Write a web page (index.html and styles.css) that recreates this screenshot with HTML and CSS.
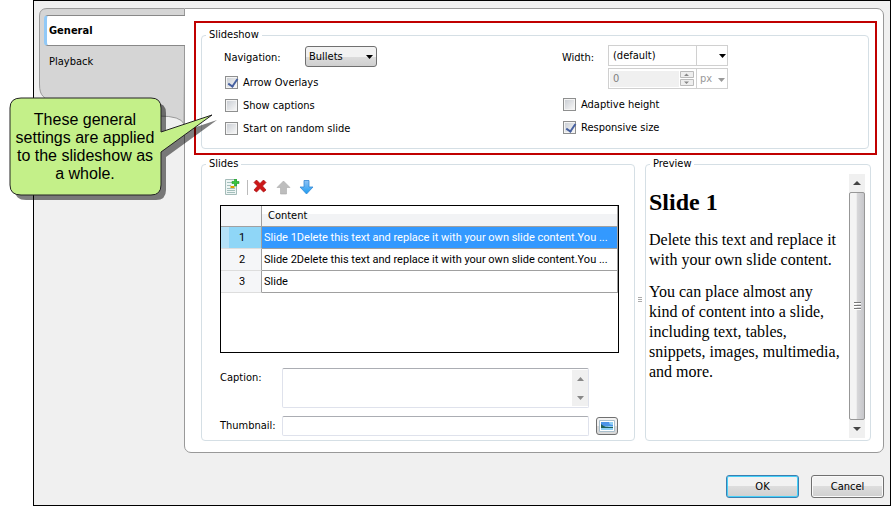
FILE: index.html
```
<!DOCTYPE html>
<html lang="en">
<head>
<meta charset="utf-8">
<title>Slideshow Properties</title>
<link rel="stylesheet" href="styles.css">
</head>
<body>
<div class="dialog">
  <div class="workspace">
    <nav class="tabs">
      <svg class="tabs-shape" viewBox="0 0 145 116"><path d="M146 .5H8Q.5 .5 .5 8V76C.5 90 6 88 12 96C20 110 50 108 120 108Q142 108 145 116Z" fill="#d5d5d5" stroke="#999"/></svg>
      <a class="tab active" href="#general">General</a>
      <a class="tab" href="#playback">Playback</a>
    </nav>
    <main class="page" id="general">
      <div class="highlight">
        <fieldset class="group slideshow">
          <legend>Slideshow</legend>
          <div class="column">
            <div class="field">
              <label class="nav-label" for="navigation">Navigation:</label>
              <span class="dropdown">
                <select id="navigation"><option>Bullets</option></select>
                <svg class="arrow" viewBox="0 0 7 4"><path d="M0 0h7L3.500 4z"/></svg>
              </span>
            </div>
            <label class="check"><input type="checkbox" checked>Arrow Overlays</label>
            <label class="check"><input type="checkbox">Show captions</label>
            <label class="check"><input type="checkbox">Start on random slide</label>
          </div>
          <div class="column">
            <div class="field size-field">
              <label class="width-label" for="width-mode">Width:</label>
              <div class="size-controls">
                <span class="flat-select">
                  <select id="width-mode"><option>(default)</option></select>
                  <svg class="arrow" viewBox="0 0 7 4"><path d="M0 0h7L3.500 4z"/></svg>
                </span>
                <div class="size-row">
                  <span class="spinner">
                    <input type="text" value="0" aria-label="Width value" disabled>
                    <svg viewBox="0 0 14 15"><path d="M.5.500h13v6H.5zM.5 8.500h13v6H.5z" fill="#eee" stroke="#bbb"/><path d="M4 5h5L6.500 2.500zM4 10.500h5L6.500 13z" fill="#888"/></svg>
                  </span>
                  <span class="unit">
                    <select aria-label="Unit" disabled><option>px</option></select>
                    <svg class="arrow" viewBox="0 0 7 4"><path d="M0 0h7L3.500 4z"/></svg>
                  </span>
                </div>
              </div>
            </div>
            <label class="check"><input type="checkbox">Adaptive height</label>
            <label class="check"><input type="checkbox" checked>Responsive size</label>
          </div>
        </fieldset>
      </div>
      <div class="lower">
        <fieldset class="group">
          <legend>Slides</legend>
          <div class="slides">
            <div class="toolbar">
              <button type="button" aria-label="Add slide"><svg viewBox="0 0 16 16"><path d="M1.500.500h11v15h-11z" fill="#eef5f4" stroke="#a5bcb9"/><path d="M3 3.500h5M3 6.500h4M3 9.500h8M3 11.500h8M3 13.500h8" stroke="#a3bfbc"/><path d="M6.500 7h4v2h-4z" fill="#dba000"/><path d="M10.500 0h2v2.500H15v2h-2.500V7h-2V4.500H8v-2h2.500z" fill="#39c83c" stroke="#189525" stroke-width=".6"/></svg></button>
              <span class="separator"></span>
              <button type="button" aria-label="Delete slide"><svg viewBox="0 0 16 16"><path d="M1 3.500 3.500 1 7 4.500 10.500 1 13 3.500 9.500 7 13 11 10.500 13 7 9.500 3.500 13 1 11 4.500 7z" fill="#cc1718" stroke="#a80c0c" stroke-width=".7"/></svg></button>
              <button type="button" aria-label="Move up"><svg viewBox="0 0 16 16"><path d="M7.500 2 14 8.500H10.500V15h-6V8.500H1z" fill="#bdbdbd" stroke="#aaa" stroke-width=".6"/></svg></button>
              <button type="button" aria-label="Move down"><svg viewBox="0 0 16 16"><defs><linearGradient id="down" x1="0" x2="0" y1="0" y2="1"><stop stop-color="#8fc2f5"/><stop offset="1" stop-color="#1b9cf2"/></linearGradient></defs><path d="M5 1.500h5V8H14L7.500 15 1 8h4z" fill="url(#down)" stroke="#3488d4" stroke-width=".8"/></svg></button>
            </div>
            <div class="list">
              <table>
                <thead><tr><th class="number"></th><th>Content</th></tr></thead>
                <tbody>
                  <tr class="selected"><td class="number">1</td><td>Slide 1Delete this text and replace it with your own slide content.You ...</td></tr>
                  <tr><td class="number">2</td><td>Slide 2Delete this text and replace it with your own slide content.You ...</td></tr>
                  <tr><td class="number">3</td><td>Slide</td></tr>
                </tbody>
              </table>
            </div>
            <div class="details">
              <label for="caption">Caption:</label>
              <div class="caption-box">
                <textarea id="caption"></textarea>
                <svg viewBox="0 0 16 36"><path d="M0 0h16v36H0z" fill="#f0f0f0"/><path d="M5 11h7L8.500 7zM5 26h7l-3.500 4z" fill="#888"/></svg>
              </div>
              <label for="thumbnail">Thumbnail:</label>
              <input id="thumbnail" type="text">
              <button class="picture" type="button" aria-label="Choose thumbnail"><svg viewBox="0 0 16 12"><path d="M.5.500h15v11H.5z" fill="#fff" stroke="#a9bfcc"/><path d="M2 2h12v8H2z" fill="#8fd0f5"/><path d="M2 2h8c0 2 1 3 4 3v1H2z" fill="#4b93e8"/><path d="M2 4c3 3 6 3 12 3v1H2z" fill="#1f5f58"/></svg></button>
            </div>
          </div>
        </fieldset>
        <div class="splitter"><i></i><i></i><i></i></div>
        <fieldset class="group preview">
          <legend>Preview</legend>
          <article>
            <h1>Slide 1</h1>
            <p>Delete this text and replace it with your own slide content.</p>
            <p>You can place almost any kind of content into a slide, including text, tables, snippets, images, multimedia, and more.</p>
          </article>
          <div class="scrollbar">
            <svg viewBox="0 0 16 18"><path d="M4 11h8L8 7z"/></svg>
            <div class="thumb"><i></i><i></i><i></i></div>
            <svg viewBox="0 0 16 18"><path d="M4 7h8L8 11z"/></svg>
          </div>
        </fieldset>
      </div>
    </main>
  </div>
  <footer>
    <button class="command default" type="button">OK</button>
    <button class="command" type="button">Cancel</button>
  </footer>
</div>
<aside class="callout">
  <svg viewBox="0 0 222 116">
    <path transform="translate(5 5)" d="M12 4H142Q152 4 152 14V38L203 21 152 58V91Q152 101 142 101H12Q1 101 1 91V14Q1 4 12 4Z" fill="#000" fill-opacity=".5"/>
    <path d="M12 4H142Q152 4 152 14V38L203 21 152 58V91Q152 101 142 101H12Q1 101 1 91V14Q1 4 12 4Z" fill="#c4f089" stroke="#222"/>
  </svg>
  <p>These general settings are applied to the slideshow as a whole.</p>
</aside>
</body>
</html>
```
FILE: styles.css
```
* { box-sizing: border-box; }
body {
  margin: 0;
  background: #fff;
  color: #000;
  font: 11px/14px "DejaVu Sans Condensed", "Noto Sans", sans-serif;
}
button, input, select, textarea { font: inherit; color: inherit; margin: 0; }
.dialog {
  display: flex;
  flex-direction: column;
  min-height: 100vh;
  margin-left: 33px;
  padding: 7px 6px 7px 5px;
  border: 1px solid #000;
  background: #f0f0f0;
}
.workspace { display: flex; flex: 1; }
.tabs { position: relative; width: 145px; flex: none; padding: 7px 0 0 5px; }
.tabs-shape { position: absolute; left: 0; top: 0; width: 145px; height: 116px; }
.tab {
  position: relative;
  display: flex;
  align-items: center;
  height: 31px;
  padding-left: 5px;
  color: #000;
  text-decoration: none;
}
.tab.active {
  z-index: 1;
  margin-right: -1px;
  font-weight: bold;
  background: #fff;
  border: 1px solid #888;
  border-left: 3px solid #91c9f7;
  border-right: 0;
  border-radius: 4px 0 0 4px;
  padding-left: 2px;
}
.page {
  flex: 1;
  min-width: 0;
  display: flex;
  flex-direction: column;
  padding: 12px 6px 11px 9px;
  background: #fff;
  border: 1px solid #999;
  border-radius: 0 7px 7px 7px;
}
.highlight { border: 2px solid #c00000; padding: 5px 6px 4px 5px; }
.group { margin: 0; padding: 0; border: 1px solid #d5dfe5; border-radius: 4px; min-width: 0; }
.group > legend { margin-left: 4px; padding: 0 3px; }
.slideshow { display: grid; grid-template-columns: 338px 1fr; height: 121px; }
.column { padding: 4px 0 0 22px; }
.field { display: flex; }
.nav-label { width: 81px; padding-top: 5px; }
.dropdown { position: relative; }
select { appearance: none; }
.dropdown select {
  width: 72px;
  height: 21px;
  padding: 0 3px;
  border: 1px solid #707070;
  border-radius: 3px;
  background: linear-gradient(#f2f2f2 50%, #ddd 50%, #cfcfcf);
}
.arrow { position: absolute; right: 4px; top: 9px; width: 7px; height: 4px; }
.check { display: flex; align-items: center; height: 23px; gap: 5px; padding-left: 1px; }
.field + .check { margin-top: 4px; }
.check input {
  appearance: none;
  width: 13px;
  height: 13px;
  border: 1px solid #8e8f8f;
  background: linear-gradient(135deg, #cbcfd5, #f6f6f6) center / 9px 9px no-repeat #f4f4f4;
}
.check input:checked::before {
  content: "";
  display: block;
  width: 4px;
  height: 8px;
  margin: 0 0 0 4px;
  border: solid #4660a0;
  border-width: 0 2px 2px 0;
  transform: rotate(35deg);
}
.width-label { width: 46px; padding-top: 5px; }
.size-controls { width: 120px; display: grid; gap: 2px; margin-top: -1px; }
.flat-select { position: relative; height: 21px; }
.flat-select select {
  width: 100%;
  height: 21px;
  padding: 0 4px;
  border: 1px solid #d0d0d0;
  background: linear-gradient(#d0d0d0, #d0d0d0) 87px 0 / 1px 100% no-repeat #fff;
}
.flat-select .arrow, .unit .arrow { right: 2px; }
.size-row { display: flex; height: 21px; border: 1px solid #d0d0d0; color: #808080; }
.spinner { display: flex; align-items: center; width: 88px; padding: 1px 2px 1px 1px; border-right: 1px solid #d0d0d0; }
.spinner input { flex: 1; min-width: 0; height: 16px; padding: 0 3px; border: 0; background: #f0f0f0; }
.spinner svg { width: 14px; height: 15px; margin-left: 1px; }
.unit { position: relative; flex: 1; display: flex; }
.unit select { width: 100%; padding: 0 3px; border: 0; background: none; opacity: 1; color: #999; }
.unit .arrow { fill: #999; }
.lower { flex: 1; display: grid; grid-template-columns: minmax(0, 434px) 10px minmax(0, 1fr); padding: 2px 6px 0 7px; }
.slides { padding: 0 15px 4px 18px; }
.toolbar { display: flex; align-items: center; gap: 7px; height: 24px; padding-left: 4px; margin-top: 4px; }
.toolbar button { width: 16px; height: 16px; padding: 0; border: 0; background: none; }
.toolbar svg { display: block; width: 16px; height: 16px; }
.separator { width: 1px; height: 15px; background: #bbb; margin-right: -2px; }
.list { height: 148px; margin-top: 6px; border: 1px solid #000; }
table { width: 100%; border-collapse: separate; border-spacing: 0; table-layout: fixed; }
th, td { height: 22px; padding: 0 2px; border: solid #a0a0a0; border-width: 0 1px 1px 0; font-weight: normal; text-align: left; white-space: nowrap; overflow: hidden; }
td { font-family: Roboto, sans-serif; }
th { height: 21px; padding-left: 6px; background: linear-gradient(#fff 40%, #f2f3f5 40%); }
.number { width: 41px; padding-left: 4px; text-align: center; background: #f5f6f8; }
td.number { border-bottom-color: #ddd; }
.selected td { background: #3399ff; color: #fff; }
.selected td.number { background: linear-gradient(90deg, #b5e1f7 8px, #8fd6f7 8px); color: #000; }
.details { display: grid; grid-template-columns: 62px 307px 30px; row-gap: 8px; margin-top: 15px; }
.details label { padding-top: 3px; }
.caption-box { position: relative; height: 40px; grid-column: 2 / 4; width: 307px; }
.caption-box svg { position: absolute; right: 1px; top: 2px; width: 16px; height: 36px; }
textarea, #thumbnail { display: block; width: 100%; border: 1px solid #dfe2ec; border-top-color: #abadb3; border-radius: 2px; background: #fff; padding: 2px; resize: none; }
textarea { height: 40px; }
#thumbnail { height: 20px; }
.picture { width: 22px; height: 18px; margin: 1px 0 0 7px; padding: 0 2px; border: 1px solid #707070; border-radius: 3px; background: linear-gradient(#f2f2f2 50%, #d8d8d8 50%); }
.picture svg { display: block; width: 16px; height: 12px; }
.splitter { display: flex; flex-direction: column; justify-content: center; align-items: center; gap: 1px; }
.splitter i { width: 4px; height: 1px; background: #aaa; }
.preview { display: flex; }
article { flex: 1; min-width: 0; padding: 0 6px 0 3px; font: 16px/20px "Liberation Serif", serif; }
h1 { margin: 17px 0 13px; font-size: 24px; line-height: 29px; }
article p { margin: 0 0 12px; }
.scrollbar { display: flex; flex-direction: column; width: 16px; margin: 3px 5px 2px 0; background: #f0f0f0; }
.scrollbar svg { width: 16px; height: 18px; fill: #444; }
.thumb { flex: 1; display: flex; flex-direction: column; justify-content: center; align-items: center; gap: 1px; border: 1px solid #979797; border-radius: 2px; background: linear-gradient(90deg, #f4f4f4 45%, #d8d8da 50%, #c6c6ca); }
.thumb i { width: 7px; height: 2px; background: #777; border-bottom: 1px solid #fff; }
footer { display: flex; justify-content: flex-end; gap: 12px; padding-top: 22px; }
.command { width: 73px; height: 23px; padding: 0; border: 1px solid #707070; border-radius: 3px; background: linear-gradient(#f2f2f2 50%, #ddd 50%, #cfcfcf); box-shadow: inset 0 0 0 1px #fafafa; }
.command.default { border-color: #3c7fb1; box-shadow: inset 0 0 0 1px #46d0f8; }
.callout { position: absolute; left: 9px; top: 94px; width: 222px; height: 116px; z-index: 2; }
.callout svg { position: absolute; width: 222px; height: 116px; }
.callout p { position: relative; width: 152px; margin: 17px 0 0; padding: 0 4px; text-align: center; font: 16px/18px "Liberation Sans", sans-serif; }
```
